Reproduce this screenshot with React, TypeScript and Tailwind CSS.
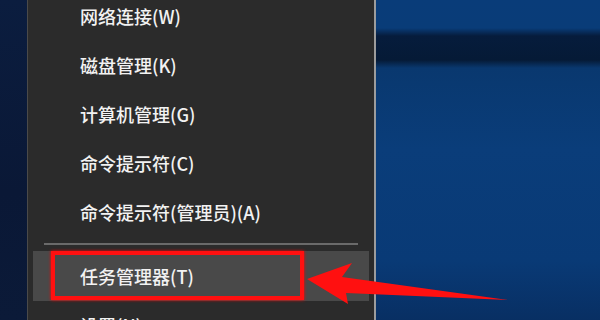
import React from "react";

const items = [
  "网络连接(W)",
  "磁盘管理(K)",
  "计算机管理(G)",
  "命令提示符(C)",
  "命令提示符(管理员)(A)",
];

const font = {
  fontFamily: '"Noto Sans CJK SC", "Noto Sans", sans-serif',
};

export default function App() {
  return (
    <div
      className="relative flex h-[320px] w-[600px] overflow-hidden bg-[#0a3c7a]"
      style={font}
    >
      {/* left desktop strip */}
      <div className="h-full w-[27px] shrink-0 bg-[linear-gradient(to_bottom,#0b1d3f,#0a1836_60%,#0b1a38)]" />

      {/* menu */}
      <div className="flex h-full w-[349px] shrink-0 flex-col border-l border-l-[#4a4a4a] border-r-2 border-r-[#9c9c9c] bg-[#2b2b2b]">
        <div className="mt-[-8px] flex flex-col">
          {items.map((t) => (
            <div
              key={t}
              className="flex h-[49px] items-center pl-[52px] text-[18px] font-medium text-[#f2f2f2]"
            >
              {t}
            </div>
          ))}
          <div className="h-[14px] px-[16px] pt-[6px]">
            <div className="h-[2px] bg-[#6a6a6a]" />
          </div>
          <div className="relative mx-[5px] flex h-[50px] items-center bg-[#494949] pl-[47px] text-[18px] font-medium text-[#f2f2f2]">
            任务管理器(T)
            <div className="absolute left-[18px] top-0 h-[49px] w-[253px] border-4 border-[#ff1010] shadow-[0_0_3px_#ff0000]" />
          </div>
          <div className="flex h-[49px] items-center pl-[52px] text-[18px] font-medium text-[#f2f2f2]">
            设置(N)
          </div>
        </div>
      </div>

      {/* right desktop */}
      <div className="h-full flex-1 bg-[linear-gradient(to_bottom,#093c79_0px,#093c78_28px,#061c3c_36px,#051a36_60px,#09386f_68px,#0a3d7a_150px,#093a76_260px,#082f63_320px)]" />

      {/* arrow */}
      <svg
        className="pointer-events-none absolute left-0 top-0"
        width="600"
        height="320"
        viewBox="0 0 600 320"
      >
        <polygon
          points="307,279 352,263 342,277 508,300 346,293 348,304"
          fill="#ff1010"
        />
      </svg>
    </div>
  );
}
